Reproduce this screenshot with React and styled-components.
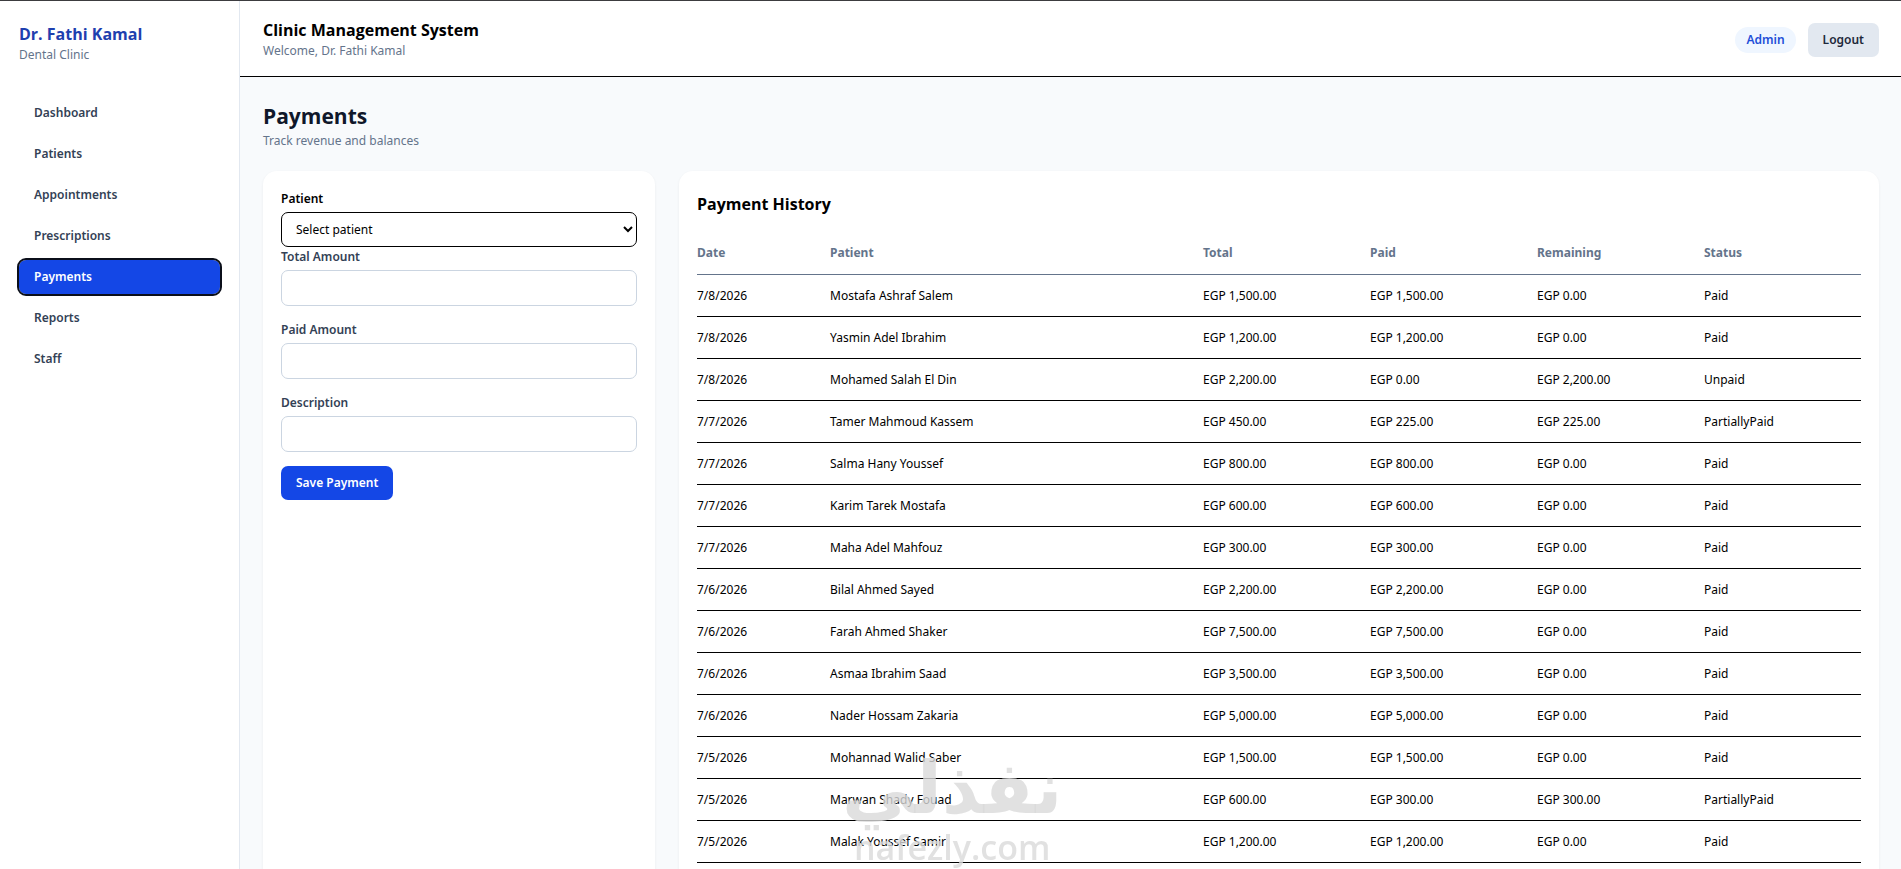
import React from "react"
import styled, { createGlobalStyle } from "styled-components"

const GlobalStyle = createGlobalStyle`
  * {
    box-sizing: border-box;
  }

  body {
    margin: 0;
    background: #f8fafc;
    color: #000;
    font-family: "Noto Sans", "Open Sans", sans-serif;
    font-size: 12px;
    line-height: 18px;
  }

  h1, h2, h3, p {
    margin: 0;
  }

  button, input, select {
    font: inherit;
  }
`

const Layout = styled.div`
  display: flex;
  min-height: 100vh;
  border-top: 1px solid #3c3c3f;
`

const Sidebar = styled.aside`
  flex: 0 0 240px;
  padding: 22px 19px;
  background: #fff;
  border-right: 1px solid #e2e8f0;
`

const Brand = styled.p`
  color: #1e40af;
  font-family: "Open Sans", sans-serif;
  font-size: 16px;
  font-weight: 700;
  line-height: 22px;
`

const Muted = styled.p`
  color: #64748b;
  line-height: 20px;
`

const Nav = styled.nav`
  display: flex;
  flex-direction: column;
  gap: 7px;
  margin-top: 31px;
`

const NavLink = styled.a`
  padding: 8px 15px;
  border-radius: 7px;
  background: ${({ $active }) => ($active ? "#1447e6" : "transparent")};
  color: ${({ $active }) => ($active ? "#fff" : "#334155")};
  font-weight: 600;
  text-decoration: none;
  outline: ${({ $active }) => ($active ? "2px solid #0b0f1a" : "none")};
`

const Main = styled.div`
  flex: 1;
  min-width: 0;
  display: flex;
  flex-direction: column;
`

const TopBar = styled.header`
  display: flex;
  align-items: center;
  justify-content: space-between;
  padding: 18px 22px 15px 23px;
  background: #fff;
  border-bottom: 1px solid #000;
`

const SystemTitle = styled.h1`
  font-family: "Open Sans", sans-serif;
  font-size: 16px;
  font-weight: 700;
  line-height: 22px;
`

const Actions = styled.div`
  display: flex;
  align-items: center;
  gap: 12px;
`

const RoleBadge = styled.span`
  padding: 4px 11px;
  border-radius: 13px;
  background: #eff6ff;
  color: #1d4ed8;
  font-weight: 600;
`

const Button = styled.button`
  padding: 8px 15px;
  border: 0;
  border-radius: 7px;
  background: ${({ $primary }) => ($primary ? "#1447e6" : "#e2e8f0")};
  color: ${({ $primary }) => ($primary ? "#fff" : "#1e293b")};
  font-weight: 600;
  cursor: pointer;
`

const Content = styled.main`
  flex: 1;
  display: flex;
  flex-direction: column;
  padding: 25px 22px 0 23px;
`

const PageTitle = styled.h2`
  color: #0f172a;
  font-family: "Open Sans", sans-serif;
  font-size: 21px;
  font-weight: 700;
  line-height: 29px;
`

const Columns = styled.div`
  flex: 1;
  display: grid;
  grid-template-columns: 392px 1fr;
  gap: 24px;
  margin-top: 20px;
`

const Card = styled.section`
  padding: 18px;
  border-radius: 14px 14px 0 0;
  background: #fff;
  box-shadow: 0 1px 3px rgba(15, 23, 42, 0.06);
`

const Field = styled.div`
  display: flex;
  flex-direction: column;
  gap: 4px;
  margin-bottom: ${({ $tight }) => ($tight ? "0" : "14px")};
`

const Label = styled.label`
  color: ${({ $dark }) => ($dark ? "#000" : "#334155")};
  font-weight: 600;
  line-height: 19px;
`

const Input = styled.input`
  width: 100%;
  padding: 8px 14px;
  border: 1px solid #cbd5e1;
  border-radius: 7px;
  background: #fff;
`

const Select = styled.select`
  width: 100%;
  padding: 7px 10px;
  border: 1px solid #000;
  border-radius: 7px;
  background: #fff;
  color: #000;
`

const CardTitle = styled.h3`
  font-family: "Open Sans", sans-serif;
  font-size: 16px;
  font-weight: 700;
  line-height: 30px;
`

const Table = styled.table`
  width: 100%;
  margin-top: 14px;
  border-spacing: 0;
  table-layout: fixed;
  text-align: left;
`

const Th = styled.th`
  width: ${({ $width }) => $width || "auto"};
  padding: 11px 0 12px;
  border-bottom: 1px solid #64748b;
  color: #64748b;
  font-weight: 700;
`

const Td = styled.td`
  padding: 12px 0 11px;
  border-bottom: 1px solid #000;
`

const Watermark = styled.div`
  position: fixed;
  left: 842px;
  top: 746px;
  display: flex;
  flex-direction: column;
  align-items: center;
  color: rgba(218, 218, 218, 0.8);
  font-family: "DejaVu Sans", sans-serif;
  font-weight: 700;
  pointer-events: none;
`

const WatermarkName = styled.span`
  font-size: 72px;
  line-height: 84px;
`

const WatermarkSite = styled.span`
  font-family: "Open Sans", sans-serif;
  font-size: 34px;
  font-weight: 600;
  line-height: 34px;
`

const links = [
  "Dashboard",
  "Patients",
  "Appointments",
  "Prescriptions",
  "Payments",
  "Reports",
  "Staff",
]

const fields = [
  { id: "total", label: "Total Amount", type: "number" },
  { id: "paid", label: "Paid Amount", type: "number" },
  { id: "description", label: "Description", type: "text" },
]

const columns = [
  { name: "Date", width: "133px" },
  { name: "Patient" },
  { name: "Total", width: "167px" },
  { name: "Paid", width: "167px" },
  { name: "Remaining", width: "167px" },
  { name: "Status", width: "157px" },
]

const payments = [
  ["7/8/2026", "Mostafa Ashraf Salem", 1500, 1500, "Paid"],
  ["7/8/2026", "Yasmin Adel Ibrahim", 1200, 1200, "Paid"],
  ["7/8/2026", "Mohamed Salah El Din", 2200, 0, "Unpaid"],
  ["7/7/2026", "Tamer Mahmoud Kassem", 450, 225, "PartiallyPaid"],
  ["7/7/2026", "Salma Hany Youssef", 800, 800, "Paid"],
  ["7/7/2026", "Karim Tarek Mostafa", 600, 600, "Paid"],
  ["7/7/2026", "Maha Adel Mahfouz", 300, 300, "Paid"],
  ["7/6/2026", "Bilal Ahmed Sayed", 2200, 2200, "Paid"],
  ["7/6/2026", "Farah Ahmed Shaker", 7500, 7500, "Paid"],
  ["7/6/2026", "Asmaa Ibrahim Saad", 3500, 3500, "Paid"],
  ["7/6/2026", "Nader Hossam Zakaria", 5000, 5000, "Paid"],
  ["7/5/2026", "Mohannad Walid Saber", 1500, 1500, "Paid"],
  ["7/5/2026", "Marwan Shady Fouad", 600, 300, "PartiallyPaid"],
  ["7/5/2026", "Malak Youssef Samir", 1200, 1200, "Paid"],
]

const egp = (value) =>
  `EGP ${value.toLocaleString("en-US", { minimumFractionDigits: 2 })}`

const PaymentForm = () => (
  <Card as="form" onSubmit={(e) => e.preventDefault()}>
    <Field $tight>
      <Label $dark htmlFor="patient">
        Patient
      </Label>
      <Select id="patient">
        <option>Select patient</option>
      </Select>
    </Field>
    {fields.map(({ id, label, type }) => (
      <Field key={id}>
        <Label htmlFor={id}>{label}</Label>
        <Input id={id} type={type} />
      </Field>
    ))}
    <Button $primary type="submit">
      Save Payment
    </Button>
  </Card>
)

const PaymentHistory = () => (
  <Card>
    <CardTitle>Payment History</CardTitle>
    <Table>
      <thead>
        <tr>
          {columns.map(({ name, width }) => (
            <Th key={name} $width={width}>
              {name}
            </Th>
          ))}
        </tr>
      </thead>
      <tbody>
        {payments.map(([date, patient, total, paid, status]) => (
          <tr key={patient}>
            <Td>{date}</Td>
            <Td>{patient}</Td>
            <Td>{egp(total)}</Td>
            <Td>{egp(paid)}</Td>
            <Td>{egp(total - paid)}</Td>
            <Td>{status}</Td>
          </tr>
        ))}
      </tbody>
    </Table>
  </Card>
)

const App = () => (
  <>
    <GlobalStyle />
    <Layout>
      <Sidebar>
        <Brand>Dr. Fathi Kamal</Brand>
        <Muted>Dental Clinic</Muted>
        <Nav>
          {links.map((link) => (
            <NavLink key={link} href="#" $active={link === "Payments"}>
              {link}
            </NavLink>
          ))}
        </Nav>
      </Sidebar>
      <Main>
        <TopBar>
          <div>
            <SystemTitle>Clinic Management System</SystemTitle>
            <Muted>Welcome, Dr. Fathi Kamal</Muted>
          </div>
          <Actions>
            <RoleBadge>Admin</RoleBadge>
            <Button type="button">Logout</Button>
          </Actions>
        </TopBar>
        <Content>
          <PageTitle>Payments</PageTitle>
          <Muted>Track revenue and balances</Muted>
          <Columns>
            <PaymentForm />
            <PaymentHistory />
          </Columns>
        </Content>
      </Main>
    </Layout>
    <Watermark>
      <WatermarkName lang="ar">نفذلي</WatermarkName>
      <WatermarkSite>nafezly.com</WatermarkSite>
    </Watermark>
  </>
)

export default App
